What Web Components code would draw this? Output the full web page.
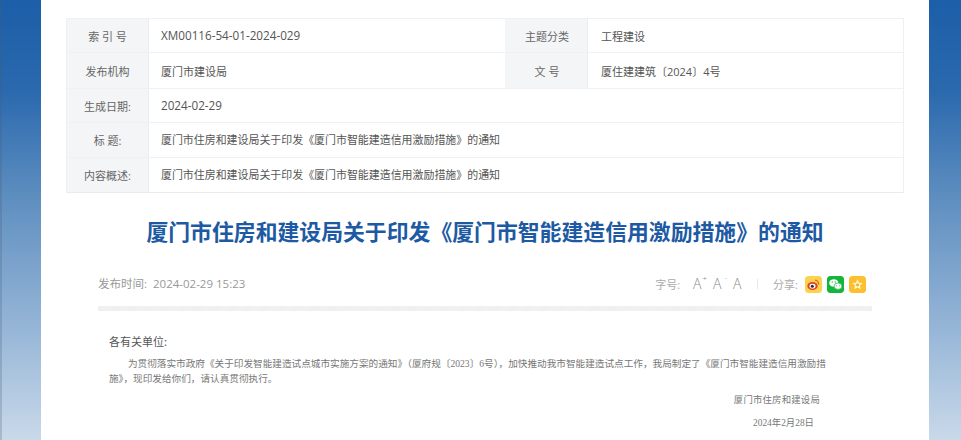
<!DOCTYPE html>
<html lang="zh"><head><meta charset="utf-8">
<style>
html,body{margin:0;padding:0;height:440px;overflow:hidden;background:#fff}
</style></head><body>
<article-page>
  <meta-table>
    <meta-row style="--h:34px"><meta-cell label>索 引 号</meta-cell><meta-cell wide latin>XM00116-54-01-2024-029</meta-cell><meta-cell label second>主题分类</meta-cell><meta-cell last>工程建设</meta-cell></meta-row>
    <meta-row style="--h:36px"><meta-cell label>发布机构</meta-cell><meta-cell wide>厦门市建设局</meta-cell><meta-cell label second>文 号</meta-cell><meta-cell last>厦住建建筑〔2024〕4号</meta-cell></meta-row>
    <meta-row style="--h:34px"><meta-cell label>生成日期:</meta-cell><meta-cell fill latin>2024-02-29</meta-cell></meta-row>
    <meta-row style="--h:35px"><meta-cell label>标 题:</meta-cell><meta-cell fill cn>厦门市住房和建设局关于印发《厦门市智能建造信用激励措施》的通知</meta-cell></meta-row>
    <meta-row style="--h:34px"><meta-cell label>内容概述:</meta-cell><meta-cell fill cn>厦门市住房和建设局关于印发《厦门市智能建造信用激励措施》的通知</meta-cell></meta-row>
  </meta-table>
  <article-title>厦门市住房和建设局关于印发《厦门市智能建造信用激励措施》的通知</article-title>
  <article-toolbar date="发布时间:&nbsp;&nbsp;2024-02-29 15:23"></article-toolbar>
  <article-body></article-body>
</article-page>
<script>
const CJK='"Open Sans","Noto Sans CJK SC",sans-serif';
function def(name,html,init){customElements.define(name,class extends HTMLElement{constructor(){super();this.attachShadow({mode:'open'}).innerHTML=typeof html==='function'?html(this):html;}connectedCallback(){init&&init(this)}})}
def('article-page',`<style>
:host{display:grid;grid-template-columns:41px 1fr 32px;width:961px;height:440px;overflow:hidden}
.side{background:linear-gradient(180deg,#1c5ea8 0,#2a69ae 90px,#5f8fc0 200px,#9bb9d9 340px,#c9d9e9 440px)}
.l{box-shadow:inset 2px 0 0 rgba(70,90,120,.25)}
main{background:#fff;padding:18px 25px 0;min-width:0;box-sizing:border-box}
</style><div class="side l"></div><main><slot></slot></main><div class="side"></div>`);
def('meta-table',`<style>:host{display:block;width:838px;border:1px solid #eef0f2;border-bottom:1px solid #e9ecef;box-sizing:border-box}</style><slot></slot>`);
def('meta-row',`<style>:host{display:flex;height:var(--h);box-sizing:border-box;border-bottom:1px solid #eff1f3}
:host(:last-child){border-bottom:0}</style><slot></slot>`);
customElements.define('meta-cell',class extends HTMLElement{constructor(){super();this.attachShadow({mode:'open'}).innerHTML=`<style>
:host{display:flex;align-items:center;box-sizing:border-box;font:11px/1 ${CJK};color:#555;padding:1px 0 0 12px;white-space:pre}
:host([latin]){font-size:11.7px}
:host([cn]){font-size:10.95px}
:host([last]){padding-left:13px}
:host([label]){width:82px;padding:1px 0 0;justify-content:center;background:#f4f5f7;border-right:1px solid #eaecef;flex:none;color:#666}
:host([second]){width:83px;padding-left:2px}
:host([wide]){width:356px;flex:none}
:host([last]),:host([fill]){flex:1}
</style><slot></slot>`}});
def('article-title',`<style>:host{display:block;margin-top:23px;text-align:center;font:700 21.85px/30px "Noto Sans CJK SC",sans-serif;color:#1d5aa3;white-space:nowrap}</style><slot></slot>`);
def('article-toolbar',h=>`<style>
:host{display:flex;align-items:center;justify-content:space-between;margin:23px 32px 0;height:30px;width:774px;padding-right:6px;box-sizing:border-box;font:11.5px/1 ${CJK};color:#999}
.r{display:flex;align-items:center;font-size:11px;color:#aaa}
.a{font-size:14px;color:#888;position:relative;width:10px;display:block;font-weight:300}
.a sup{font-size:8px;position:absolute;top:-3px;right:-4px;line-height:1}
.sep{width:1px;height:10px;background:#e8e8e8;margin:0 15px 0 15px}
.ic{width:17px;height:17px;border-radius:3px;display:block}
svg{display:block}
</style><span>${h.getAttribute('date')}</span>
<div class="r"><span>字号:</span>
<span class="a" style="margin-left:13px">A<sup>+</sup></span><span class="a" style="margin-left:10px">A<sup>-</sup></span><span class="a" style="margin-left:10px">A</span>
<i class="sep" style="margin-left:14px"></i><span>分享:</span>
<svg class="ic" style="margin-left:7px" viewBox="0 0 17 17"><rect width="17" height="17" rx="3" fill="#fcd24f"/><ellipse cx="7.5" cy="10" rx="5.2" ry="4" fill="#e0452b"/><ellipse cx="7.5" cy="10.2" rx="3" ry="2.4" fill="#fff"/><circle cx="7.3" cy="10.3" r="1.5" fill="#2a2a2a"/><path d="M10 4.2a3.8 3.8 0 0 1 3.6 4.4" fill="none" stroke="#e0652b" stroke-width="1.2"/></svg>
<svg class="ic" style="margin-left:5px" viewBox="0 0 17 17"><rect width="17" height="17" rx="3" fill="#13b53a"/><ellipse cx="6.8" cy="7" rx="4.6" ry="3.8" fill="#fff"/><ellipse cx="11" cy="10.2" rx="3.9" ry="3.2" fill="#fff" stroke="#13b53a" stroke-width=".7"/><circle cx="5.2" cy="6" r=".7" fill="#13b53a"/><circle cx="8.2" cy="6" r=".7" fill="#13b53a"/><circle cx="9.7" cy="9.7" r=".5" fill="#13b53a"/><circle cx="12.3" cy="9.7" r=".5" fill="#13b53a"/></svg>
<svg class="ic" style="margin-left:5px" viewBox="0 0 17 17"><rect width="17" height="17" rx="3" fill="#fcc02e"/><path d="M8.5 3.2l1.6 3.5 3.7.4-2.8 2.5.8 3.7-3.3-1.9-3.3 1.9.8-3.7L3.2 7.1l3.7-.4z" fill="#fff6cf"/><circle cx="8.5" cy="8.8" r="1.6" fill="#f7b42a"/></svg>
</div>`);
def('article-body',`<style>
:host{display:block;margin:7px 32px 0;width:774px;box-sizing:border-box;padding:21px 11px 0;font:9.4px/15px "Liberation Serif","Noto Sans CJK SC",serif;color:#777;position:relative}
.bar{height:5px;margin:-21px -11px 21px;background:repeating-linear-gradient(135deg,#eee 0 1px,#f2f2f2 1px 2px)}
h4{margin:0 0 6px;font:400 11px/18px "Noto Sans CJK SC",sans-serif;color:#555}
p{margin:0;text-indent:19px;width:725px}
.m{font-size:9.63px}
.s,.d{text-align:right;text-indent:0}
.s{width:711px;margin-top:7px;letter-spacing:.2px}
.d{width:705px;margin-top:8px}
</style><div class="bar"></div><h4>各有关单位:</h4>
<p class="m">为贯彻落实市政府《关于印发智能建造试点城市实施方案的通知》\uFF08厦府规〔2023〕6号\uFF09\uFF0C加快推动我市智能建造试点工作\uFF0C我局制定了《厦门市智能建造信用激励措施》\uFF0C现印发给你们\uFF0C请认真贯彻执行\u3002</p>
<p class="s">厦门市住房和建设局</p><p class="d">2024年2月28日</p>`);
</script>
</body></html>
